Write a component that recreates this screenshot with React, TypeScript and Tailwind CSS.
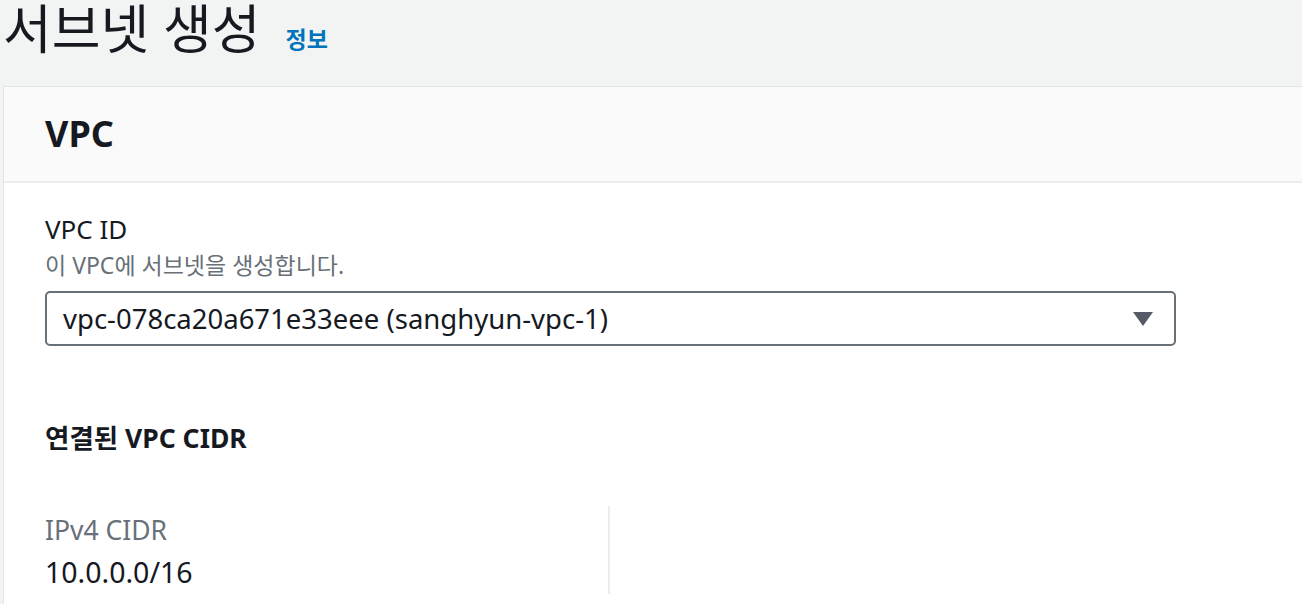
export default function App() {
  return (
    <div
      className="w-[1302px] h-[604px] overflow-hidden bg-[#f2f3f3] text-[#16191f]"
      style={{ fontFamily: '"Noto Sans", "Noto Sans CJK KR", sans-serif' }}
    >
      {/* page title */}
      <div className="flex items-end pl-[3px] pb-[8px]">
        <h1 className="text-[53px] leading-[58px] font-normal">서브넷 생성</h1>
        <a className="ml-[25px] mb-[7px] text-[23px] font-bold text-[#0073bb] leading-none">정보</a>
      </div>

      {/* card */}
      <div className="ml-[3px] mt-[20px] h-[600px] border-l border-t border-[#e3e5e5] bg-white">
        <div className="h-[96px] bg-[#fafafa] border-b-2 border-[#eaeded] flex items-center pl-[41px]">
          <h2 className="text-[36px] font-bold leading-none">VPC</h2>
        </div>

        <div className="pl-[41px] pt-[28px]">
          <div className="text-[26px] leading-[36px]">VPC ID</div>
          <div className="mt-[2px] text-[23px] leading-[32px] text-[#687078]">이 VPC에 서브넷을 생성합니다.</div>
          <div className="mt-[10px] w-[1131px] h-[55px] border-2 border-[#687078] rounded-[5px] flex items-center justify-between pl-[16px] pr-[21px]">
            <span className="text-[27.5px]">vpc-078ca20a671e33eee (sanghyun-vpc-1)</span>
            <svg width="20" height="14" viewBox="0 0 20 14">
              <path d="M0 0 H20 L10 14 Z" fill="#545b64" />
            </svg>
          </div>

          <div className="mt-[74px] text-[26.5px] font-bold leading-[36px]">연결된 VPC CIDR</div>

          <div className="mt-[50px] flex">
            <div className="w-[565px] border-r-2 border-[#eaeded] pt-[6px] h-[88px]">
              <div className="text-[26.5px] leading-[36px] text-[#687078]">IPv4 CIDR</div>
              <div className="mt-[2px] text-[28.5px] leading-[44px]">10.0.0.0/16</div>
            </div>
          </div>
        </div>
      </div>
    </div>
  );
}
